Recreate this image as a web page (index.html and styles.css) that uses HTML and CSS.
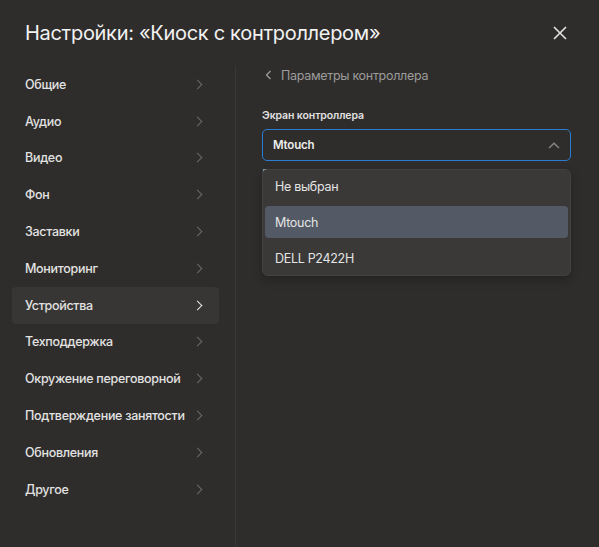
FILE: index.html
```html
<!DOCTYPE html>
<html lang="ru">
<head>
    <meta charset="UTF-8">
    <title>Настройки</title>
    <link rel="stylesheet" href="styles.css">
</head>
<body>
    <div class="modal">
        <div class="modal-header">
            <div class="modal-title">Настройки: «Киоск с контроллером»</div>
            <div class="close-button">
                <svg width="14" height="14" viewBox="0 0 14 14"><path d="M1 1L13 13M13 1L1 13" stroke="#e4e4e4" stroke-width="1.6" fill="none"/></svg>
            </div>
        </div>

        <div class="modal-body">
            <div class="sidebar">
                <div class="menu-item">Общие<span class="chevron"></span></div>
                <div class="menu-item">Аудио<span class="chevron"></span></div>
                <div class="menu-item">Видео<span class="chevron"></span></div>
                <div class="menu-item">Фон<span class="chevron"></span></div>
                <div class="menu-item">Заставки<span class="chevron"></span></div>
                <div class="menu-item">Мониторинг<span class="chevron"></span></div>
                <div class="menu-item active">Устройства<span class="chevron"></span></div>
                <div class="menu-item">Техподдержка<span class="chevron"></span></div>
                <div class="menu-item">Окружение переговорной<span class="chevron"></span></div>
                <div class="menu-item">Подтверждение занятости<span class="chevron"></span></div>
                <div class="menu-item">Обновления<span class="chevron"></span></div>
                <div class="menu-item">Другое<span class="chevron"></span></div>
            </div>

            <div class="content">
                <div class="back-link">
                    <svg width="7" height="10" viewBox="0 0 7 10"><path d="M5.5 1L1.5 5L5.5 9" stroke="#9a9a9a" stroke-width="1.3" fill="none"/></svg>
                    Параметры контроллера
                </div>

                <div class="field-label">Экран контроллера</div>
                <div class="select-wrap">
                    <div class="select-box">
                        <span>Mtouch</span>
                        <svg width="12" height="7" viewBox="0 0 12 7"><path d="M1 6L6 1.2L11 6" stroke="#8a8a8a" stroke-width="1.3" fill="none"/></svg>
                    </div>
                    <div class="field-hint">Выберите экран для контроллера</div>

                    <div class="dropdown">
                        <div class="dropdown-item">Не выбран</div>
                        <div class="dropdown-item selected">Mtouch</div>
                        <div class="dropdown-item">DELL P2422H</div>
                    </div>
                </div>
            </div>
        </div>
    </div>
</body>
</html>
```

FILE: styles.css
```css
body {
    margin: 0;
    background-color: #2f2d2b;
    font-family: Inter, 'Noto Sans', sans-serif;
    color: #e6e6e6;
}

.modal {
    width: 599px;
    height: 547px;
    display: flex;
    flex-direction: column;
    overflow: hidden;
}

.modal-header {
    height: 66px;
    display: flex;
    align-items: center;
    justify-content: space-between;
    padding: 0 32px 0 25px;
    box-sizing: border-box;
}

.modal-title {
    font-size: 20px;
    letter-spacing: -0.3px;
    color: #f2f2f2;
}

.close-button {
    width: 14px;
    height: 14px;
    display: flex;
    cursor: pointer;
}

.modal-body {
    flex: 1;
    display: flex;
}

.sidebar {
    width: 236px;
    box-sizing: border-box;
    padding: 0 16px 0 12px;
    border-right: 1px solid #3a3836;
    display: flex;
    flex-direction: column;
}

.menu-item {
    height: 36.8px;
    flex-shrink: 0;
    display: flex;
    align-items: center;
    justify-content: space-between;
    padding: 0 18px 0 13px;
    font-size: 12.5px;
    letter-spacing: -0.3px;
    font-weight: 500;
    color: #e2e2e2;
    border-radius: 4px;
    white-space: nowrap;
}

.menu-item.active {
    background-color: #383634;
}

.chevron {
    width: 6px;
    height: 6px;
    border-top: 1.3px solid #6c6a68;
    border-right: 1.3px solid #6c6a68;
    transform: rotate(45deg);
}

.menu-item.active .chevron {
    border-color: #e6e6e6;
}

.content {
    flex: 1;
    padding: 0 28px 0 26px;
}

.back-link {
    display: flex;
    align-items: center;
    gap: 9px;
    padding-left: 3px;
    height: 18px;
    font-size: 12.5px;
    letter-spacing: -0.3px;
    color: #9c9c9c;
}

.field-label {
    margin-top: 25px;
    font-size: 10.5px;
    letter-spacing: -0.1px;
    font-weight: 600;
    color: #e0e0e0;
    height: 14px;
    line-height: 14px;
}

.select-wrap {
    position: relative;
    margin-top: 6px;
}

.select-box {
    height: 32px;
    box-sizing: border-box;
    border: 1.5px solid #2a7dd3;
    border-radius: 5px;
    display: flex;
    align-items: center;
    justify-content: space-between;
    padding: 0 10px;
    font-size: 11.5px;
    font-weight: 600;
    letter-spacing: -0.2px;
    color: #ececec;
}

.field-hint {
    margin-top: 5px;
    font-size: 11px;
    color: #9c9c9c;
}

.dropdown {
    position: absolute;
    left: 0;
    right: 0;
    top: 40px;
    background-color: #3a3938;
    border: 1px solid #434140;
    border-radius: 6px;
    padding: 0 2px 1px;
    display: flex;
    flex-direction: column;
    gap: 4px;
    box-shadow: 0 4px 10px rgba(0, 0, 0, 0.25);
}

.dropdown-item {
    height: 32px;
    display: flex;
    align-items: center;
    padding: 0 10px;
    font-size: 12.5px;
    letter-spacing: -0.3px;
    color: #e4e4e4;
    border-radius: 4px;
}

.dropdown-item.selected {
    background-color: #535a66;
}
```
